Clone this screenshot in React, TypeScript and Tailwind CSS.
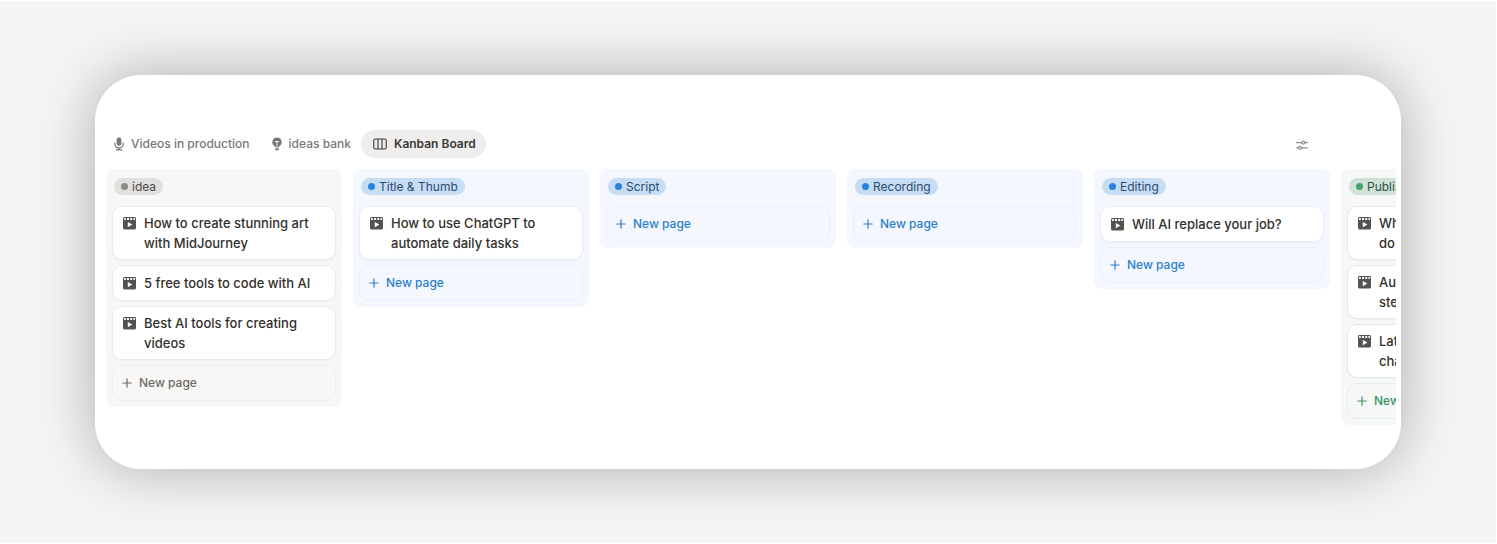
import type { ReactNode } from 'react';
import clsx from 'clsx';

type Tone = 'gray' | 'blue' | 'green';

type Column = {
  name: string;
  tone: Tone;
  cards: string[];
};

const columns: Column[] = [
  {
    name: 'idea',
    tone: 'gray',
    cards: ['How to create stunning art with MidJourney', '5 free tools to code with AI', 'Best AI tools for creating videos'],
  },
  { name: 'Title & Thumb', tone: 'blue', cards: ['How to use ChatGPT to automate daily tasks'] },
  { name: 'Script', tone: 'blue', cards: [] },
  { name: 'Recording', tone: 'blue', cards: [] },
  { name: 'Editing', tone: 'blue', cards: ['Will AI replace your job?'] },
  {
    name: 'Published',
    tone: 'green',
    cards: ['What AI agents can\ndo for you', 'Automate your inbox\nstep by step', 'Latest AI tools that\nchange how we work'],
  },
];

const toneMap: Record<Tone, { column: string; pill: string; dot: string; add: string; card: string }> = {
  gray: {
    column: 'bg-[#f8f7f6]',
    pill: 'bg-[#e1e0de] text-[#4b4a47]',
    dot: 'bg-[#8e8c88]',
    add: 'border-[#efeeec] text-[#6b6a66]',
    card: 'border-[#eceae8]',
  },
  blue: {
    column: 'bg-[#f4f8fe]',
    pill: 'bg-[#c7ddf4] text-[#2b4a70]',
    dot: 'bg-[#2a82dc]',
    add: 'border-[#e6eff7] text-[#2a7fcb]',
    card: 'border-[#e6edf4]',
  },
  green: {
    column: 'bg-[#f5f8f6]',
    pill: 'bg-[#d0e1d7] text-[#2c5542]',
    dot: 'bg-[#459f70]',
    add: 'border-[#e6ece8] text-[#369465]',
    card: 'border-[#e3e9e5]',
  },
};

function MicIcon() {
  return (
    <svg viewBox="0 0 14 14" className="size-3.5 shrink-0" fill="none" aria-hidden="true">
      <rect x="4.6" y="0.4" width="4.8" height="8.4" rx="2.4" fill="currentColor" />
      <path d="M2.8 6.2v.6a4.2 4.2 0 0 0 8.4 0v-.6M7 11v1.8M4.2 12.9h5.6" stroke="currentColor" strokeWidth="1.3" strokeLinecap="round" />
    </svg>
  );
}

function BulbIcon() {
  return (
    <svg viewBox="0 0 14 14" className="size-3.5 shrink-0" fill="none" aria-hidden="true">
      <path d="M7 .4a4.7 4.7 0 0 0-2.7 8.5c.5.4.8.7.8 1.4h3.8c0-.7.3-1 .8-1.4A4.7 4.7 0 0 0 7 .4Z" fill="currentColor" />
      <path d="M5.2 11.2h3.6v.8a1.6 1.6 0 0 1-1.6 1.6h-.4A1.6 1.6 0 0 1 5.2 12v-.8Z" fill="currentColor" />
      <path d="M5.2 4.5h3.6M7 4.8v4.4" stroke="#fff" strokeWidth="0.9" strokeLinecap="round" />
    </svg>
  );
}

function BoardIcon() {
  return (
    <svg viewBox="0 0 14 14" className="size-3.5 shrink-0" fill="none" stroke="currentColor" strokeWidth="1.1" aria-hidden="true">
      <rect x="0.8" y="2" width="12.4" height="10" rx="1.6" />
      <path d="M5 2v10M9 2v10" />
    </svg>
  );
}

function SettingsIcon() {
  return (
    <svg viewBox="0 0 14 14" className="size-3.5" fill="none" stroke="currentColor" strokeWidth="1.2" strokeLinecap="round" aria-hidden="true">
      <path d="M1.5 4.6h5.4M10.1 4.6h2.4M1.5 9.8h1.9M6.6 9.8h5.9" />
      <circle cx="8.5" cy="4.6" r="1.5" />
      <circle cx="5" cy="9.8" r="1.5" />
    </svg>
  );
}

function ClipIcon() {
  return (
    <svg viewBox="0 0 13 13" className="mt-1 size-[13px] shrink-0 text-[#555350]" aria-hidden="true">
      <path d="M0 1.5C0 .7.7 0 1.5 0h10c.8 0 1.5.7 1.5 1.5v9.6c0 .8-.7 1.5-1.5 1.5h-10C.7 12.6 0 11.900 0 11.100Z" fill="currentColor" />
      <path d="M1.100 1h1.700v2.100H1.100ZM4 1h2v2.100H4ZM7.200 1h2v2.100h-2ZM10.400 1h1.500v2.100h-1.500ZM4.800 5v5.200l4.600-2.600Z" fill="#fff" />
    </svg>
  );
}

function PlusIcon() {
  return (
    <svg viewBox="0 0 10 10" className="size-2.5 shrink-0" fill="none" stroke="currentColor" strokeWidth="1.2" strokeLinecap="round" aria-hidden="true">
      <path d="M5 .8v8.4M.8 5h8.4" />
    </svg>
  );
}

function Tab({ icon, label, active = false }: { icon: ReactNode; label: string; active?: boolean }) {
  return (
    <button
      type="button"
      className={clsx(
        'flex h-7 items-center rounded-full text-xs',
        active ? 'gap-[7px] bg-[#efeeec] pr-[10px] pl-3 font-semibold text-[#3a3835]' : 'gap-[5px] px-[10px] font-medium text-[#7a7874]'
      )}
    >
      {icon}
      <span>{label}</span>
    </button>
  );
}

function BoardColumn({ column }: { column: Column }) {
  const tone = toneMap[column.tone];

  return (
    <section className={clsx('w-[236px] shrink-0 rounded-lg px-1.5 pt-[9px] pb-1.5', tone.column)}>
      <h2 className={clsx('ml-0.5 flex h-[17px] w-fit items-center gap-1 rounded-full px-[7px] text-xs', tone.pill)}>
        <span className={clsx('size-[7px] rounded-full', tone.dot)} />
        {column.name}
      </h2>

      <div className="mt-[11px] flex flex-col gap-[5px]">
        {column.cards.map((title) => (
          <article
            key={title}
            className={clsx('flex min-h-9 items-center rounded-[10px] border bg-white px-[10px] py-1.5 shadow-[0_1px_2px_rgba(0,0,0,0.04)]', tone.card)}
          >
            <div className="flex gap-2">
              <ClipIcon />
              <h3 className="text-[13px] leading-5 font-medium whitespace-pre-line text-[#32302c]">{title}</h3>
            </div>
          </article>
        ))}
        <button
          type="button"
          className={clsx('flex h-9 items-center gap-[7px] rounded-[10px] border px-[9px] text-xs font-medium', tone.add)}
        >
          <PlusIcon />
          New page
        </button>
      </div>
    </section>
  );
}

export default function App() {
  return (
    <div className="border-y border-r border-white bg-[#f5f5f5] px-[95px] py-[74px] font-['Inter',sans-serif]">
      <main className="overflow-hidden rounded-[46px] bg-white pt-[55px] pr-[5px] pb-11 shadow-[0_0_60px_rgba(0,0,0,0.3)]">
        <header className="flex items-center justify-between pr-[87px] pl-[7px]">
          <nav className="flex" aria-label="Views">
            <Tab icon={<MicIcon />} label="Videos in production" />
            <Tab icon={<BulbIcon />} label="ideas bank" />
            <Tab icon={<BoardIcon />} label="Kanban Board" active />
          </nav>
          <button type="button" aria-label="View settings" className="mt-0.5 text-[#8f8d89]">
            <SettingsIcon />
          </button>
        </header>

        <div className="mt-[11px] flex items-start gap-[11px] overflow-hidden pl-[11px]">
          {columns.map((column) => (
            <BoardColumn key={column.name} column={column} />
          ))}
        </div>
      </main>
    </div>
  );
}
